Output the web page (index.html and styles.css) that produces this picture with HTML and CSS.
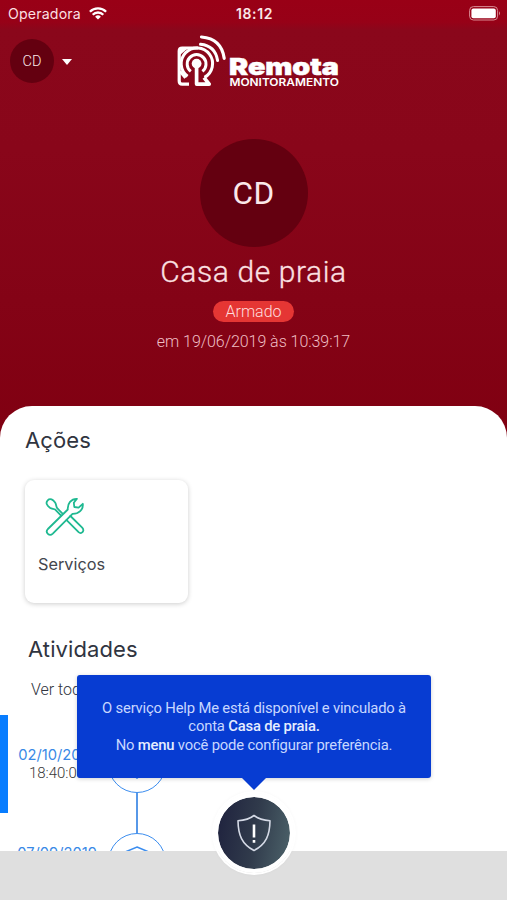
FILE: index.html
```html
<!DOCTYPE html>
<html lang="pt-BR">
<head>
<meta charset="utf-8">
<title>Remota Monitoramento</title>
<link rel="stylesheet" href="styles.css">
</head>
<body>
<div class="app">
  <header class="hero">
    <div class="status">
      <div class="carrier"><span>Operadora</span>
        <svg width="18" height="13" viewBox="0 0 18 13" fill="none" stroke="#fff" stroke-width="2.3"><path d="M.9 4.8a11.5 11.5 0 0 1 16.2 0M3.7 7.7a7.5 7.5 0 0 1 10.6 0"/><path d="M9 12.6 6.1 9.8a4.1 4.1 0 0 1 5.8 0z" fill="#fff" stroke="none"/></svg>
      </div>
      <div class="clock">18:12</div>
      <svg class="battery" width="32" height="15" viewBox="0 0 32 15"><rect x=".6" y=".6" width="28" height="13.4" rx="3.8" fill="none" stroke="#d98c94"/><rect x="2.4" y="2.4" width="24.4" height="9.8" rx="2" fill="#fff"/><path d="M30 5.2q2 2 0 4.2z" fill="#d98c94"/></svg>
    </div>
    <div class="topbar">
      <div class="account"><div class="avatar small">CD</div><span class="caret"></span></div>
      <svg class="logo" width="164" height="54" viewBox="0 0 164 54">
        <g transform="translate(0 .9)">
          <g fill="none" stroke="#fff" stroke-width="3">
            <path d="M22 13.100H6.200Q3.200 13.100 3.200 16.100V46Q3.200 49.200 6.200 49.200H13" stroke-width="3.200"/>
            <path d="M11.600 41.400A15.700 15.700 0 1 1 28.500 42.500"/>
            <path d="M14.800 36.500A9.400 9.400 0 1 1 26.400 36.500"/>
            <path d="M20.600 29V49.200H33.200L28 42.800" stroke-width="3.700" stroke-linejoin="round"/>
            <path d="M4 36.500 9.500 43"/>
            <path d="M24.500 9.400Q39.200 10.800 41.600 25.600" stroke-linecap="round"/>
            <path d="M25.500 2.100Q45.500 3.800 48.200 23.400" stroke-linecap="round" stroke-width="3.200"/>
          </g>
          <path d="M4 20V14h7z" fill="#fff"/>
          <circle cx="20.600" cy="28.700" r="4.900" fill="#fff"/>
        </g>
        <text class="brand" x="53" y="41.400" textLength="110" lengthAdjust="spacingAndGlyphs">Remota</text>
        <text class="brand-sub" x="53.400" y="51.700" textLength="109.500" lengthAdjust="spacingAndGlyphs">MONITORAMENTO</text>
      </svg>
    </div>
    <div class="profile">
      <div class="avatar large">CD</div>
      <h1>Casa de praia</h1>
      <span class="badge">Armado</span>
      <p class="since">em 19/06/2019 às 10:39:17</p>
    </div>
  </header>
  <main class="sheet">
    <h2>Ações</h2>
    <div class="card">
      <svg width="40" height="40" viewBox="0 0 40 40" fill="none" stroke="#1fb991" stroke-width="1.8" stroke-linejoin="round" stroke-linecap="round">
        <path d="M17.300 16.400 12.200 11.200C11 9.700 11.400 7.500 10.100 5.600 8.100 2.800 5.200 .700 2.700 3.300s-.500 5.500 2.200 7.500c2 1.300 4.100 .800 5.600 2l5.100 5.300M21.600 23.100l12 12.100c1.700 1.600 4.100 .800 4.600-1.100 .400-1.300 0-2.300-1-3.400L25.400 19"/>
        <path d="M2.900 32 22.800 12.500C22.300 6.500 26.100 1.600 32 1.800L28.800 5.700l.500 4.300 4.300 .600 4.200-3.800C38.500 12.700 33.600 17 27.500 16.900L7.800 36.600c-3.400 3.200-8.100-1.100-4.900-4.600z"/>
      </svg>
      <span>Serviços</span>
    </div>
    <h2 class="activities-title">Atividades</h2>
    <a class="see-all">Ver todas</a>
    <div class="timeline">
      <div class="entry current"><div class="when"><b>02/10/2019</b><span>18:40:00</span></div>
        <div class="track"><div class="node"><svg width="28" height="32" viewBox="0 0 28 32"><path d="M14 1 26 6q1 16-12 24Q1 22 2 6z"/></svg></div></div></div>
      <div class="entry"><div class="when"><b>07/09/2019</b><span>18:40:00</span></div>
        <div class="track"><div class="node"><svg width="28" height="32" viewBox="0 0 28 32"><path d="M14 1 26 6q1 16-12 24Q1 22 2 6z"/></svg></div></div></div>
    </div>
  </main>
  <footer class="bottom"></footer>
  <div class="tooltip">
    <p>O serviço Help Me está disponível e vinculado à</p>
    <p>conta <b>Casa de praia.</b></p>
    <p>No <b>menu</b> você pode configurar preferência.</p>
  </div>
  <button class="help" aria-label="Help Me">
    <svg width="36" height="40" viewBox="0 0 36 40" fill="none" stroke="#d5dae6" stroke-width="1.600" stroke-linejoin="round"><path d="M18 2.500C13.500 6 8 7.300 2 7.800c.200 14.200 3.800 23.200 16 29.700C30.200 31 33.800 22 34 7.800 28 7.300 22.500 6 18 2.500z"/><path d="M18 11.500V24.500M18 27V29.800" stroke="#fff" stroke-width="2.600"/></svg>
  </button>
</div>
</body>
</html>
```
FILE: styles.css
```css
* { box-sizing: border-box; }
body { margin: 0; font-family: Roboto, "Liberation Sans", sans-serif; }
h1, h2, p { margin: 0; font-weight: 400; }
.app { position: relative; width: 507px; height: 900px; overflow: hidden; background: #fff; }
.hero { height: 445px; background: linear-gradient(#990016 0, #970117 22px, #8a071b 30px, #89061a 150px, #840316 300px, #800011 445px); color: #fff; }
.status { display: grid; grid-template-columns: 1fr auto 1fr; align-items: center; height: 27px; padding: 0 6px 0 8px; }
.carrier { display: flex; align-items: center; gap: 8px; font: 14.2px Inter, sans-serif; letter-spacing: .15px; color: #fbdfe1; }
.clock { font: 600 14px Inter, sans-serif; letter-spacing: .6px; color: #fbe6e8; }
.battery { justify-self: end; }
.topbar { display: flex; height: 62px; padding: 7px 10px 0; }
.account { display: flex; align-items: center; gap: 8px; width: 166px; height: 54px; }
.avatar { display: flex; align-items: center; justify-content: center; border-radius: 50%; background: #640010; color: #fbe8ea; }
.small { width: 44px; height: 44px; font-size: 14.5px; font-weight: 300; }
.large { width: 108px; height: 108px; font-size: 31.5px; letter-spacing: .5px; }
.caret { margin-top: 1px; border: 5.5px solid transparent; border-top: 6px solid #fff; border-bottom: 0; }
.logo { fill: #fff; }
.brand { font: 900 23.3px Inter, sans-serif; stroke: #fff; stroke-width: .5px; }
.brand-sub { font: 600 10.2px Inter, sans-serif; }
.profile { display: flex; flex-direction: column; align-items: center; padding-top: 50px; }
h1 { height: 54px; font-size: 30px; font-weight: 300; line-height: 49px; letter-spacing: .6px; color: #fbe0e2; -webkit-text-stroke: .3px; }
.badge { width: 81px; height: 21px; border-radius: 11px; background: #e53634; text-align: center; font-size: 16px; line-height: 22px; font-weight: 300; letter-spacing: 0; color: #ffdddd; }
.since { margin-top: 9px; font-size: 16px; line-height: 22px; font-weight: 300; letter-spacing: -.05px; color: #efbfc4; }
.sheet { position: relative; height: 494px; margin-top: -39px; padding: 19px 25px 0; border-radius: 32px 32px 0 0; background: #fff; color: #303440; }
h2 { font: 22px/30px Inter, sans-serif; letter-spacing: .1px; }
.card { width: 163px; height: 123px; margin-top: 25px; padding: 17px 13px; border-radius: 9px; background: #fff; box-shadow: 0 1px 5px rgba(0,0,0,.2); }
.card svg { display: block; margin-left: 7px; }
.card span { display: block; margin-top: 15px; font: 16.3px/24px Inter, sans-serif; color: #44464d; }
.activities-title { margin: 31px 0 0 3px; }
.see-all { display: block; height: 51px; padding-left: 6px; font-size: 16px; font-weight: 300; line-height: 51px; }
.timeline { margin: 0 -25px; }
.entry { display: flex; height: 98px; border-left: 8px solid transparent; }
.current { border-left-color: #087dff; }
.when { display: flex; flex-direction: column; justify-content: center; width: 98px; align-items: center; font-size: 15px; line-height: 18px; color: #383838; font-weight: 300; }
.when b { font: 14.7px/18px Inter, sans-serif; color: #3989e6; }
.track { display: flex; flex-direction: column; align-items: center; width: 62px; }
.track::before, .track::after { content: ""; flex: 1; width: 1.5px; background: #5798e8; }
.current .track::before { background: none; }
.node { display: grid; place-items: center; width: 58px; height: 58px; border: 1.5px solid #3b8def; border-radius: 50%; }
.node path { fill: none; stroke: #3b8def; stroke-width: 1.5px; }
.bottom { position: absolute; left: 0; right: 0; bottom: 0; height: 49px; background: #dfdfdf; }
.tooltip { position: absolute; left: 77px; top: 675px; width: 354px; height: 103px; padding-top: 24px; border-radius: 3px; background: #073cd2; box-shadow: 0 1px 4px rgba(0,0,0,.18); text-align: center; color: #c7d7ff; font-size: 14.8px; font-weight: 300; line-height: 18.3px; letter-spacing: -.18px; white-space: nowrap; }
.tooltip::after { content: ""; position: absolute; left: 164px; top: 102px; border: 13px solid transparent; border-top-color: #073cd2; border-bottom: 0; }
.tooltip b { font-weight: 500; color: #e6edff; }
.help { position: absolute; left: 214px; top: 793px; display: grid; place-items: center; width: 80px; height: 80px; padding: 0; border: 4px solid #fff; border-radius: 50%; background: linear-gradient(100deg, #20243f 10%, #303a4b 50%, #50686e) border-box; background-clip: padding-box; box-shadow: 0 0 0 2px #fff, 0 0 5px rgba(0,0,0,.08); }
```
